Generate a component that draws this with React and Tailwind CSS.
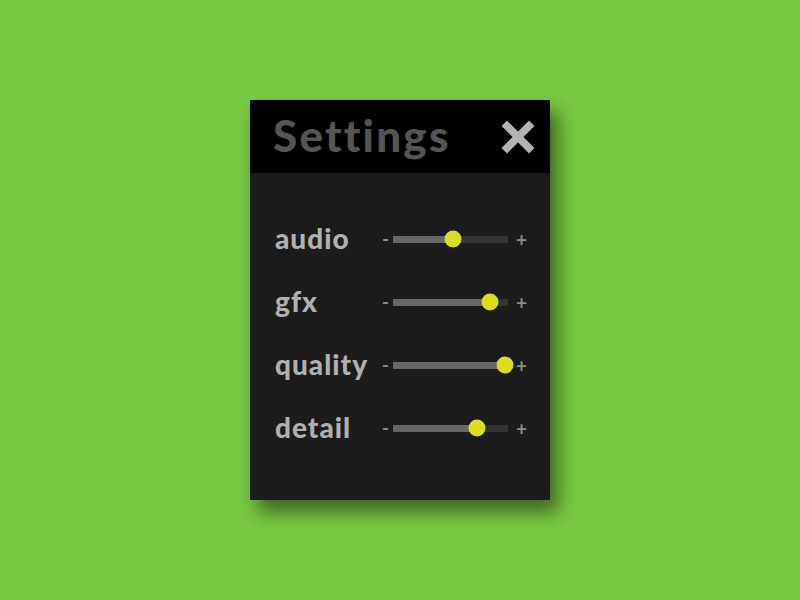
import React, { useState } from 'react';

const settings = [
    { label: 'audio', value: 0.52 },
    { label: 'gfx', value: 0.84 },
    { label: 'quality', value: 0.97 },
    { label: 'detail', value: 0.73 },
];

const Slider = ({ value, onChange }) => (
    <div className="flex items-center text-[#8a8a8a] text-[19px] font-bold">
        <button className="w-[11px] text-left leading-none pb-[2px]" onClick={() => onChange(Math.max(0, value - 0.1))}>-</button>
        <div className="relative w-[115px] h-[7px] bg-[#333333]">
            <div className="h-full bg-[#666666]" style={{ width: `${value * 100}%` }} />
            <div
                className="absolute top-1/2 w-[17px] h-[17px] rounded-full bg-[#d9df1f] -translate-x-1/2 -translate-y-1/2"
                style={{ left: `${value * 100}%` }}
            />
        </div>
        <button className="w-[19px] text-right leading-none" onClick={() => onChange(Math.min(1, value + 0.1))}>+</button>
    </div>
);

const App = () => {
    const [values, setValues] = useState(settings.map((s) => s.value));

    const setValue = (i, v) => setValues(values.map((old, j) => (j === i ? v : old)));

    return (
        <div className="w-[800px] h-[600px] bg-[#7ac943] flex items-center justify-center" style={{ fontFamily: 'Lato, "Open Sans", sans-serif' }}>
            <div className="w-[300px] h-[400px] bg-[#1b1b1b] shadow-[8px_12px_18px_rgba(0,0,0,0.5)] flex flex-col">
                {/* Header */}
                <div className="h-[73px] bg-black flex items-center justify-between pl-[23px] pr-[14px]">
                    <h1 className="text-[44px] font-black text-[#555555] leading-none pb-[4px] tracking-[2.2px]">Settings</h1>
                    <svg width="36" height="36" viewBox="0 0 36 36">
                        <path d="M5 5 L31 31 M31 5 L5 31" stroke="#b3b3b3" strokeWidth="9" strokeLinecap="square" fill="none" transform="translate(18 18) scale(0.85) translate(-18 -18)" />
                    </svg>
                </div>

                {/* Rows */}
                <div className="flex flex-col gap-[23px] pt-[46px] pl-[25px]">
                    {settings.map((s, i) => (
                        <div key={s.label} className="h-[40px] flex items-center">
                            <span className="w-[107px] text-[28px] font-black text-[#b0b0b0] leading-none pb-[3px] tracking-[1px]">{s.label}</span>
                            <Slider value={values[i]} onChange={(v) => setValue(i, v)} />
                        </div>
                    ))}
                </div>
            </div>
        </div>
    );
};

export default App;
